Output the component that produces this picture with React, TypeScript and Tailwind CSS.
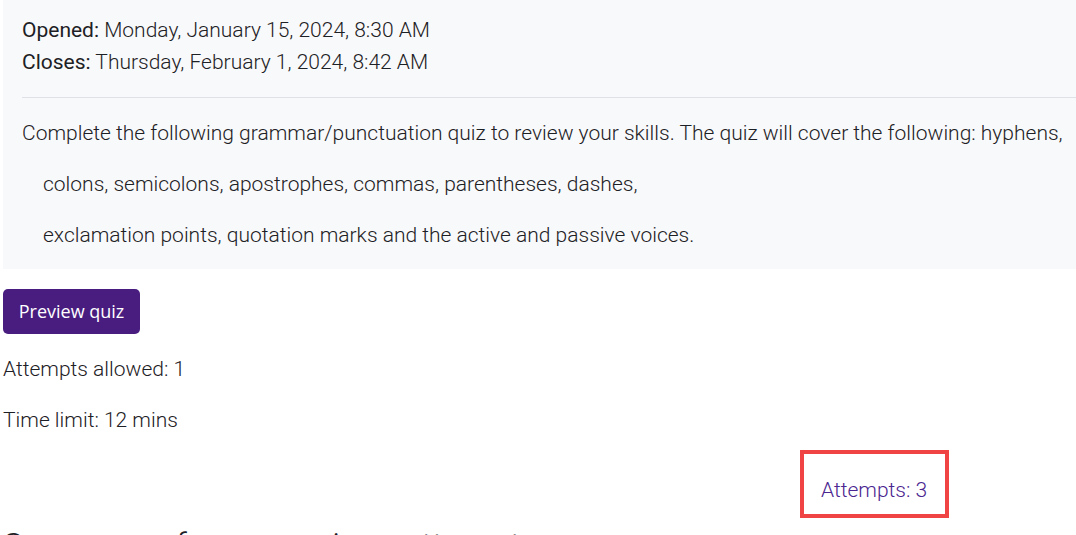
export default function App() {
  return (
    <div className="min-h-screen bg-white pl-[3px] text-[#1d2125] font-['Roboto',sans-serif] font-light overflow-hidden">
      {/* Dates + description */}
      <div className="bg-[#f8f9fa] pl-[19px] pt-[14px] pb-[18px]">
        <div className="text-[21px] leading-[32px]">
          <div>
            <span className="font-normal">Opened:</span> Monday, January 15, 2024, 8:30 AM
          </div>
          <div>
            <span className="font-normal">Closes:</span> Thursday, February 1, 2024, 8:42 AM
          </div>
        </div>
        <hr className="mt-[19px] border-0 border-t border-[#dee2e6]" />
        <div className="mt-[19px] flex flex-col gap-[19px] text-[21px] leading-[32px]">
          <p>Complete the following grammar/punctuation quiz to review your skills. The quiz will cover the following: hyphens,</p>
          <p className="pl-[21px]">colons, semicolons, apostrophes, commas, parentheses, dashes,</p>
          <p className="pl-[21px]">exclamation points, quotation marks and the active and passive voices.</p>
        </div>
      </div>

      {/* Actions */}
      <button className="mt-[20px] h-[45px] w-[137px] rounded-[5px] bg-[#491d80] text-white text-[18px] font-normal font-['Open_Sans',sans-serif]">
        Preview quiz
      </button>

      <div className="mt-[19px] flex flex-col gap-[19px] text-[21px] leading-[32px]">
        <p>Attempts allowed: 1</p>
        <p>Time limit: 12 mins</p>
      </div>

      <div className="mt-[14px] ml-[797px] h-[68px] w-[149px] border-4 border-[#f04444] pl-[17px] pt-[20px]">
        <a href="#" className="text-[21px] leading-[32px] text-[#4b2690]">Attempts: 3</a>
      </div>

      <h2 className="mt-[7px] text-[34px] leading-[40px] font-light">Summary of your previous attempts</h2>
    </div>
  );
}
